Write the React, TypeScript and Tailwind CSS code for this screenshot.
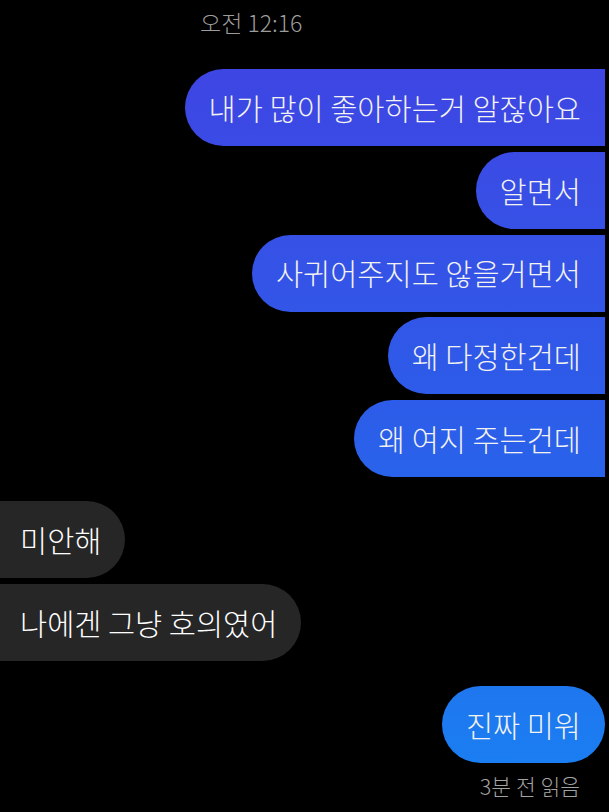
import clsx from "clsx";

const sent = [
  { text: "내가 많이 좋아하는거 알잖아요", corners: "rounded-tr-[22px] rounded-br-[6px]" },
  { text: "알면서", corners: "rounded-tr-[6px] rounded-br-[6px]" },
  { text: "사귀어주지도 않을거면서", corners: "rounded-tr-[6px] rounded-br-[6px]" },
  { text: "왜 다정한건데", corners: "rounded-tr-[6px] rounded-br-[6px]" },
  { text: "왜 여지 주는건데", corners: "rounded-tr-[6px] rounded-br-[22px]" },
];

const received = [
  { text: "미안해", corners: "rounded-tl-[22px] rounded-bl-[6px]" },
  { text: "나에겐 그냥 호의였어", corners: "rounded-tl-[6px] rounded-bl-[22px]" },
];

const bubble =
  "h-[77px] flex items-center px-[24px] text-[29.5px] font-light leading-none text-[#f2f2f2] whitespace-nowrap";

// the gradient is pinned to the screen, like the messenger does it
const blue = "bg-fixed bg-linear-to-b from-[#4040e2] via-[#2c5ce9] to-[#1682f2]";

export default function App() {
  return (
    <div
      className="w-[609px] h-[812px] bg-black overflow-hidden"
      style={{ fontFamily: '"Noto Sans CJK KR", "Noto Sans", sans-serif' }}
    >
      <div className="h-[44px] flex items-center pl-[200px] text-[23px] font-light text-[#9c9c9c]">
        오전 12:16
      </div>

      <div className="mt-[25px] flex flex-col items-end gap-[5.75px] pr-[4px]">
        {sent.map((m, i) => (
          <div key={i} className={clsx(bubble, blue, "rounded-l-full", m.corners)}>
            {m.text}
          </div>
        ))}
      </div>

      <div className="mt-[24px] flex flex-col items-start gap-[6px]">
        {received.map((m, i) => (
          <div
            key={i}
            className={clsx(bubble, "bg-[#262626] text-white pl-[20px] rounded-r-full", m.corners)}
          >
            {m.text}
          </div>
        ))}
      </div>

      <div className="mt-[25px] flex flex-col items-end pr-[4px]">
        <div className={clsx(bubble, blue, "rounded-full")}>진짜 미워</div>
        <div className="mt-[11px] pr-[25px] text-[21.5px] font-light leading-[24px] text-[#a3a3a3]">
          3분 전 읽음
        </div>
      </div>
    </div>
  );
}
